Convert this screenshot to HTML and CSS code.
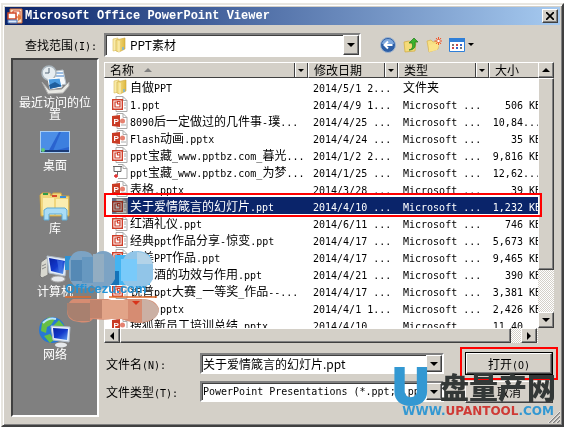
FILE: index.html
```html
<!DOCTYPE html>
<html lang="zh-CN">
  <head>
    <meta charset="UTF-8" />
    <meta name="viewport" content="width=device-width, initial-scale=1.0" />
    <title>Microsoft Office PowerPoint Viewer</title>
    <link rel="stylesheet" href="styles.css">
  </head>
  <body>
    <!-- Shared icons -->
    <svg class="defs" aria-hidden="true">
      <linearGradient id="gold" x1="0" x2="1">
        <stop offset="0" stop-color="#f8e797" />
        <stop offset="1" stop-color="#dfb83e" />
      </linearGradient>
      <linearGradient id="screen" x1="0" y1="0" x2="1" y2="1">
        <stop offset="0" stop-color="#0a22a0" />
        <stop offset="0.5" stop-color="#1238cc" />
        <stop offset="1" stop-color="#5c9cf0" />
      </linearGradient>
      <symbol id="folder" viewBox="0 0 16 16">
        <path d="M2 2l5-1v12l-5 1z" fill="#f9eba8" stroke="#d9bb55" stroke-width=".6" />
        <path d="M5 3l9-2v11l-6 3-3-1z" fill="url(#gold)" stroke="#c9a43c" stroke-width=".6" />
        <path d="M8 4v11" stroke="#fff6c8" />
        <path d="M12 10v3" stroke="#6cb4e8" stroke-width="1.400" />
      </symbol>
      <symbol id="ppt" viewBox="0 0 16 16">
        <path d="M4 .5h7l4 4v11H4z" fill="#fff" stroke="#aaa" />
        <path d="M11 .5v4h4M12 7h2M12 9h2M12 12h2" fill="none" stroke="#aaa" />
        <path d="M.7 3.700h9.600v9.600H.7z" fill="#fff" stroke="#cf3f2a" stroke-width="1.400" />
        <path d="M5 6H3v5h5V8M5.500 5.500h2.500v2.500H5.500z" fill="none" stroke="#cf3f2a" stroke-width="1.200" />
      </symbol>
      <symbol id="pptx" viewBox="0 0 16 16">
        <path d="M5 .5h6l4 4v11H5z" fill="#fff" stroke="#aaa" />
        <path d="M11 .5v4h4M9 12h5" fill="none" stroke="#aaa" />
        <circle cx="10.500" cy="8" r="2.500" fill="#e58170" />
        <path d="M0 3l8-1v12l-8-1z" fill="#c93b24" />
        <text x="1.500" y="11" class="icon-letter">P</text>
      </symbol>
      <symbol id="show" viewBox="0 0 16 16">
        <path d="M6 .5h5l4 4v10H6M11 .5v4h4" fill="none" stroke="#aaa" />
        <path d="M1 2.500h9M2 2.500v5h7v-5M5.500 8v3" fill="none" stroke="#666" />
        <path d="M4 10v4M2 12h4" stroke="#d22" stroke-width="1.300" />
      </symbol>
      <symbol id="monitor" viewBox="0 0 32 32">
        <path d="M2 9l7-5v18l-6 3-2-2z" fill="#d8d8cf" stroke="#777" />
        <path d="M3 13l4-2M3 16l4-2" stroke="#888" />
        <path d="M8 3l20 3-2 17-16-3z" fill="#e3edf8" stroke="#b3bfcc" />
        <path d="M10 5l16 3-2 13-12-3z" fill="url(#screen)" />
        <path d="M18 7l6 1-2 12-2-1z" fill="#4778e8" opacity=".6" />
        <ellipse cx="19" cy="26" rx="7" ry="3" fill="#e6e9ec" stroke="#aaa" />
      </symbol>
    </svg>

    <main class="dialog">
      <header class="titlebar">
        <svg class="app-icon" viewBox="0 0 16 16">
          <path d="M3 1h12v14H3z" fill="#f6e0c8" stroke="#d86a32" />
          <path d="M6 3h7v6H6z" fill="#fff" stroke="#d24726" />
          <path d="M1 5h8v6H1z" fill="#fff" stroke="#d24726" stroke-width="1.500" />
          <path d="M1 12h9v3H1z" fill="#dce9fa" stroke="#4a74b8" />
          <path d="M11 6v7l3-2V8z" fill="#e77d3c" />
        </svg>
        <h1>Microsoft Office PowerPoint Viewer</h1>
        <button class="close" type="button" aria-label="关闭">
          <svg viewBox="0 0 8 8"><path d="M0 0l8 8M8 0L0 8" stroke="#000" stroke-width="1.700" /></svg>
        </button>
      </header>

      <div class="lookin">
        <label for="folderSelect">查找范围<span class="en">(I):</span></label>
        <div class="combo folder-combo">
          <svg class="combo-icon"><use href="#folder" /></svg>
          <select id="folderSelect"><option>PPT素材</option></select>
          <span class="arrow"></span>
        </div>
        <nav class="tools">
          <button type="button" aria-label="后退">
            <svg viewBox="0 0 16 16">
              <circle cx="8" cy="8" r="7.500" fill="#2d5fa6" stroke="#9fb4cf" />
              <path d="M2 7a6 5 0 0 1 12 0z" fill="#7fa8dc" />
              <path d="M12.500 8H5M8 4.500L4.500 8 8 11.500" fill="none" stroke="#fff" stroke-width="2" />
            </svg>
          </button>
          <button type="button" aria-label="向上">
            <svg viewBox="0 0 16 16">
              <path d="M1 5l5-1 2 1 5-1-1 10-10 1z" fill="#f4db78" stroke="#d0a93c" stroke-width=".7" />
              <path d="M6 13c4-1 4-4 3-7H6l5-5 4 4h-3c1 5-1 8-6 8z" fill="#3db32f" stroke="#1d7a1a" stroke-width=".7" />
            </svg>
          </button>
          <button type="button" aria-label="新建文件夹">
            <svg viewBox="0 0 16 16">
              <path d="M1 4l4-1 2 2 6-1-1 8-9 3z" fill="#f7e084" stroke="#d8b14a" stroke-width=".7" />
              <path d="M3 8l11-2-3 7-8 2z" fill="#fbe48a" />
              <path d="M12.500 0v8M8.500 4h8M10 1l5 6M15 1l-5 6" stroke="#f0552a" />
              <circle cx="12.500" cy="4" r="1.200" fill="#fff" />
            </svg>
          </button>
          <button class="view" type="button" aria-label="查看">
            <svg viewBox="0 0 16 16">
              <path d="M.5 1.500h15v13H.5z" fill="#fff" stroke="#2f7fd8" />
              <path d="M0 1h16v4H0z" fill="#2f7fd8" />
              <path d="M3 7h2v2H3zM11 10h2v2h-2z" fill="#777" />
              <path d="M7 7h2v2H7zM3 10h2v2H3z" fill="#c44" />
              <path d="M11 7h2v2h-2zM7 10h2v2H7z" fill="#36c" />
            </svg>
            <i class="tri-down"></i>
          </button>
        </nav>
      </div>

      <div class="content">
        <!-- Places bar -->
        <nav class="places">
          <a href="#recent">
            <svg viewBox="0 0 32 32">
              <path d="M11 8l13-2 3 14-14 3z" fill="#f7fafc" stroke="#b8c3cc" />
              <path d="M17 9h7M17 12h8" stroke="#7da8d8" stroke-width="1.500" />
              <circle cx="10" cy="9" r="7" fill="#e6edf1" stroke="#a8b4bc" stroke-width="1.500" />
              <path d="M10 4v5H6" fill="none" stroke="#567" />
              <path d="M9 15l12-1 2 9-12 2z" fill="#4b9be0" stroke="#fff" />
              <path d="M10 21l6-3 7 4-12 3z" fill="#1f5f9e" />
              <path d="M3 18l7 8 13-1 7-7v4l-6 7-15 1z" fill="#e9e9e4" stroke="#aaa" />
            </svg>
            <span>最近访问的位置</span>
          </a>
          <a href="#desktop">
            <svg viewBox="0 0 32 32">
              <path d="M1 4h30v22H1z" fill="#a9cdf2" />
              <path d="M2 5h28v20H2z" fill="#2a63cf" />
              <path d="M2 5h18L9 25H2z" fill="#4c8ee6" />
              <path d="M22 5h8v15L14 24z" fill="#3c7fdf" />
              <path d="M2 23h28v2H2z" fill="#1b3c78" />
              <circle cx="4" cy="23" r="2" fill="#5fc878" />
            </svg>
            <span>桌面</span>
          </a>
          <a href="#library">
            <svg viewBox="0 0 32 32">
              <path d="M1 5l2-2h8l1 3 2-3h8l1 3h7v20H2z" fill="#f1d67c" stroke="#caa344" />
              <path d="M4 8h11v17H4zM17 9h12v16H17z" fill="#fbedb0" />
              <path d="M4 4h5" stroke="#2f9c48" stroke-width="2" />
              <path d="M13 6h5" stroke="#d84a2c" stroke-width="2" />
              <path d="M21 7h6" stroke="#3c8ed8" stroke-width="2" />
              <path d="M5 30V20l3-2h18l2 2v10h-5v-6H10v6z" fill="#a9dcf6" stroke="#5ea9d3" />
            </svg>
            <span>库</span>
          </a>
          <a href="#computer">
            <svg><use href="#monitor" /></svg>
            <span>计算机</span>
          </a>
          <a href="#network">
            <svg viewBox="0 0 32 32">
              <circle cx="13" cy="14" r="13" fill="#2878d4" />
              <path d="M3 7l7-6 6 2-4 6-4 2-1 6-5-2zM14 10l6-6 5 6-6 5zM5 20l6-2 4 6-4 3z" fill="#66bf45" />
              <path d="M4 7q6-6 13-4" fill="none" stroke="#bce4ff" stroke-width="2" />
              <path d="M12 10l19 1-1 15-16-2z" fill="#e8f0fa" stroke="#b3bfcc" />
              <path d="M14 12l15 1-1 11-13-2z" fill="url(#screen)" />
              <ellipse cx="22" cy="29" rx="6" ry="2.500" fill="#e6e9ec" />
            </svg>
            <span>网络</span>
          </a>
        </nav>

        <div class="main">
          <div class="list">
            <div class="list-left">
              <div class="table-clip">
                <table>
                  <colgroup>
                    <col>
                    <col class="col-date">
                    <col class="col-type">
                    <col class="col-size">
                  </colgroup>
                  <thead>
                    <tr>
                      <th><div>名称<i class="sort"></i><button type="button" aria-label="筛选名称"></button></div></th>
                      <th><div>修改日期<button type="button" aria-label="筛选日期"></button></div></th>
                      <th><div>类型<button type="button" aria-label="筛选类型"></button></div></th>
                      <th><div>大小</div></th>
                    </tr>
                  </thead>
                  <tbody id="files"></tbody>
                </table>
              </div>
              <div class="hscroll">
                <span class="sb left"></span>
                <span class="thumb"></span>
                <span class="sb right"></span>
              </div>
            </div>
            <div class="vscroll">
              <span class="sb up"></span>
              <span class="thumb"></span>
              <span class="sb down"></span>
            </div>
            <div class="row-mark"></div>
          </div>

          <form class="fields">
            <label for="fileName">文件名<span class="en">(N):</span></label>
            <div class="combo">
              <input type="text" id="fileName" value="关于爱情箴言的幻灯片.ppt" />
              <span class="arrow"></span>
            </div>
            <div class="open-mark">
              <button class="open" type="button">打开<span class="en">(O)</span></button>
            </div>
            <label for="fileType">文件类型<span class="en">(T):</span></label>
            <div class="combo">
              <select id="fileType" class="latin"><option>PowerPoint Presentations (*.ppt;*.pptx;*.pptm)</option></select>
              <span class="arrow"></span>
            </div>
            <button class="cancel" type="button">取消</button>
          </form>
        </div>
      </div>

      <svg class="grip" viewBox="0 0 12 12">
        <path d="M1 12L12 1M5 12l7-7M9 12l3-3" stroke="#808080" stroke-width="1.500" />
        <path d="M0 12L12 0M4 12l8-8M8 12l4-4" stroke="#fff" stroke-width=".7" />
      </svg>

      <!-- Site marks over the dialog -->
      <div class="brand">
        <span class="brand-u">U</span>
        <span class="brand-name">盘量产网</span>
        <span class="brand-url">WWW.<b>UPANTOOL</b>.COM</span>
      </div>
      <div class="stamp">
        <svg viewBox="0 0 98 74">
          <path d="M0 5h12v14H0z" fill="#2e91d2" />
          <path d="M50 4h35v30H50z" fill="#43b4f2" />
          <path d="M44 20h10v14H44z" fill="#1573b8" />
          <path d="M4 10q3-10 12-10 10 0 12 6 4-6 10-6 8 0 12 8v20q-5 10-14 10-6 0-9-4-5 5-12 3-8-1-11-11z" fill="#7ca3c4" />
          <path d="M6 9h11v21H6z" fill="#5589b5" />
          <path d="M17 6h11v26H17z" fill="#6798c0" />
          <path d="M28 3h11v28H28z" fill="#92adc2" />
          <path d="M57 12q3-12 15-12 14 0 16 14v14q-4 9-16 9-12 0-15-8z" fill="#91c5e8" />
          <path d="M56 8h16v22H56z" fill="#79cafa" />
          <path d="M72 1q14 1 16 12H72z" fill="#b3d3e8" />
          <path d="M8 48h35q10 4 18 0h16q14 0 17 10-1 12-18 14-12 0-24-6-6 4-24 2-4 5-14 3-12-1-12-11 0-9 6-12z" fill="#d68c72" />
          <path d="M2 52h23v18H12Q2 68 2 58z" fill="#a8806f" />
          <path d="M25 49h12v18H25z" fill="#c0846d" />
          <path d="M37 49h26v19H37z" fill="#e2a488" />
          <path d="M77 48q14 1 17 11-1 10-17 12z" fill="#cbb0a4" />
          <path d="M67 50h8l-4 4z" fill="#d8331b" />
          <path d="M0 46h26M44 46h48" stroke="#e26a2a" stroke-width="1.500" />
        </svg>
        <span>Officezu.com</span>
      </div>
    </main>

    <script src="files.js"></script>
  </body>
</html>
```
FILE: files.js
```js
// icon, name, date, type, size
const files = [
  ["folder", "自做PPT", "2014/5/1 2...", "文件夹", ""],
  ["ppt", "1.ppt", "2014/4/9 1...", "Microsoft ...", "506 KB"],
  ["pptx", "8090后一定做过的几件事-璞...", "2014/4/25 ...", "Microsoft ...", "10,84..."],
  ["pptx", "Flash动画.pptx", "2014/4/24 ...", "Microsoft ...", "35 KB"],
  ["ppt", "ppt宝藏_www.pptbz.com_暮光...", "2014/1/2 2...", "Microsoft ...", "9,816 KB"],
  ["show", "ppt宝藏_www.pptbz.com_为梦...", "2014/1/25 ...", "Microsoft ...", "12,62..."],
  ["pptx", "表格.pptx", "2014/3/28 ...", "Microsoft ...", "39 KB"],
  ["ppt", "关于爱情箴言的幻灯片.ppt", "2014/4/10 ...", "Microsoft ...", "1,232 KB"],
  ["ppt", "红酒礼仪.ppt", "2014/6/11 ...", "Microsoft ...", "746 KB"],
  ["ppt", "经典ppt作品分享-惊变.ppt", "2014/4/17 ...", "Microsoft ...", "5,673 KB"],
  ["ppt", "精美PPT作品.ppt", "2014/4/17 ...", "Microsoft ...", "9,465 KB"],
  ["ppt", "葡萄酒的功效与作用.ppt", "2014/4/21 ...", "Microsoft ...", "390 KB"],
  ["ppt", "锐普ppt大赛_一等奖_作品--...", "2014/4/17 ...", "Microsoft ...", "3,381 KB"],
  ["pptx", "数据.pptx", "2014/4/1 1...", "Microsoft ...", "2,426 KB"],
  ["pptx", "搜狐新员工培训总结.pptx", "2014/4/10 ...", "Microsoft ...", "11,40..."],
];
const selected = 7;

// Latin runs use the narrow fixed-width font
function mixed(text) {
  return text.replace(/[\x20-\x7e]+/g, '<span class="en">$&</span>');
}

const body = document.getElementById("files");
files.forEach(([icon, ...cells], i) => {
  const row = document.createElement("tr");
  if (i === selected) row.className = "selected";
  row.innerHTML = cells
    .map((cell, c) => {
      const svg = c === 0 ? `<svg class="file-icon"><use href="#${icon}" /></svg>` : "";
      return `<td><div class="cell">${svg}<span>${mixed(cell)}</span></div></td>`;
    })
    .join("");
  body.appendChild(row);
});
```
FILE: styles.css
```css
* {
  box-sizing: border-box;
}
body {
  margin: 0;
  padding: 3px 4px 4px 1px;
  background: #fff;
  color: #000;
  font: 12px/16px "Noto Sans CJK SC", sans-serif;
}
button,
input,
select {
  font: inherit;
  color: inherit;
}
svg {
  display: block;
}
.defs {
  position: absolute;
  width: 0;
  height: 0;
}
.icon-letter {
  font: bold 8px "Liberation Sans", sans-serif;
  fill: #fff;
}
.en,
.latin {
  font-family: "DejaVu Sans Mono", monospace;
  font-size: 10px;
  line-height: 10px;
  white-space: pre;
}

.dialog {
  position: relative;
  padding: 2px;
  background: #d4d0c8;
  border: 2px solid;
  border-color: #e8e6e0 #404040 #404040 #e8e6e0;
  box-shadow: inset 1px 1px #fff, inset -1px -1px #808080;
}

/* Title bar */
.titlebar {
  display: flex;
  align-items: center;
  height: 18px;
  padding: 0 2px;
  background: linear-gradient(90deg, #0a246a, #a6caf0);
  color: #fff;
}
.app-icon {
  width: 16px;
  height: 16px;
}
.titlebar h1 {
  flex: 1;
  margin: 0 0 0 2px;
  font: bold 12px/18px "Liberation Mono", monospace;
}
.close {
  display: grid;
  place-items: center;
  width: 16px;
  height: 14px;
  padding: 0;
}
.close svg {
  width: 8px;
  height: 8px;
}

/* Raised 3D parts */
.close,
.arrow,
.sb,
.thumb,
.open,
.cancel {
  background: #d4d0c8;
  border: 1px solid;
  border-color: #fff #404040 #404040 #fff;
  box-shadow: inset -1px -1px #808080;
}

/* Look in row */
.lookin {
  display: flex;
  align-items: center;
  height: 33px;
  padding: 6px 0 0 20px;
}
.lookin label {
  width: 79px;
}
.combo {
  position: relative;
  height: 21px;
  border: 2px solid;
  border-color: #808080 #fff #fff #808080;
  box-shadow: inset 1px 1px #404040;
  background: #fff;
}
.combo select,
.combo input {
  display: block;
  width: 100%;
  height: 100%;
  padding: 0 20px 0 1px;
  border: 0;
  border-radius: 0;
  background: none;
  appearance: none;
  outline: 0;
}
.folder-combo {
  flex: 1;
  max-width: 48%;
  height: 24px;
}
.combo .combo-icon + select {
  padding-left: 24px;
}
.combo-icon {
  position: absolute;
  left: 5px;
  top: 2px;
  width: 16px;
  height: 16px;
}
.arrow {
  position: absolute;
  top: 0;
  right: 0;
  bottom: 0;
  width: 16px;
  display: grid;
  place-items: center;
  pointer-events: none;
}
.arrow::before,
.tri-down,
th button::before,
.down::before {
  content: "";
  border: 4px solid transparent;
  border-top-color: #000;
  border-bottom: 0;
}
.tools {
  display: flex;
  gap: 7px;
  margin-left: 19px;
}
.tools button {
  display: flex;
  align-items: center;
  gap: 3px;
  padding: 0;
  border: 0;
  background: none;
}
.tools svg {
  width: 16px;
  height: 16px;
}
.tri-down {
  border-width: 3px;
  border-bottom: 0;
}

/* Places bar */
.content {
  display: flex;
  gap: 5px;
  padding: 0 6px 6px;
}
.places {
  flex: none;
  width: 88px;
  min-height: 359px;
  padding-top: 4px;
  background: #808080;
  border: 2px solid;
  border-color: #404040 #fff #fff #404040;
}
.places a {
  display: flex;
  flex-direction: column;
  align-items: center;
  height: 63px;
  color: #fff;
  line-height: 12px;
  text-align: center;
  text-decoration: none;
}
.places svg {
  flex: none;
  width: 32px;
  height: 32px;
}
.places span {
  width: 74px;
}

/* File list */
.main {
  flex: 1;
  min-width: 0;
  padding-top: 4px;
}
.list {
  position: relative;
  display: flex;
  height: 281px;
  background: linear-gradient(#fff, #fff) 0 0 / calc(100% - 16px) 100% no-repeat;
}
.list-left {
  flex: 1;
  min-width: 0;
  display: flex;
  flex-direction: column;
}
.table-clip {
  flex: 1;
  min-height: 0;
  overflow: hidden;
}
table {
  width: calc(100% + 3px);
  table-layout: fixed;
  border-collapse: collapse;
}
.col-date {
  width: 90px;
}
.col-type {
  width: 91px;
}
.col-size {
  width: 52px;
}
th {
  padding: 0;
  font-weight: normal;
  text-align: left;
}
th div {
  display: flex;
  align-items: center;
  height: 16px;
  padding-left: 5px;
  background: #d4d0c8;
  border-top: 1px solid #fff;
  border-left: 1px solid #fff;
  border-bottom: 1px solid #404040;
  white-space: nowrap;
}
th button {
  display: grid;
  place-items: center;
  width: 14px;
  height: 14px;
  margin-left: auto;
  padding: 0;
  background: none;
  border: 0;
  border-left: 1px solid #404040;
  border-right: 1px solid #404040;
  box-shadow: inset 1px 0 #fff;
}
th button::before {
  border-width: 3px;
  border-bottom: 0;
}
.sort {
  margin-left: 10px;
  border: 4px solid transparent;
  border-top: 0;
  border-bottom-color: #808080;
}
td {
  padding: 0;
}
.cell {
  display: flex;
  align-items: center;
  gap: 2px;
  height: 17px;
  padding-left: 5px;
  line-height: 17px;
  white-space: nowrap;
}
td:first-child .cell {
  padding-left: 8px;
}
td:last-child .cell {
  justify-content: flex-end;
  padding: 0;
}
.file-icon {
  flex: none;
  width: 16px;
  height: 16px;
}
.selected td {
  background: #0a246a;
  color: #fff;
}
.selected td:first-child {
  background: linear-gradient(90deg, #fff 24px, #0a246a 24px);
}
.selected .file-icon {
  background: #8f9cc0;
  mix-blend-mode: multiply;
  filter: brightness(0.7);
}

/* Scroll bars */
.hscroll,
.vscroll {
  display: flex;
  background: repeating-conic-gradient(#fff 0 25%, #d4d0c8 0 50%) 0 0 / 2px 2px;
}
.hscroll {
  height: 15px;
  padding-right: 1px;
}
.hscroll .thumb {
  flex: 1;
  margin-right: 10px;
}
.vscroll {
  flex-direction: column;
  width: 16px;
  padding-bottom: 15px;
  background-clip: content-box;
}
.vscroll .thumb {
  flex: 1;
  margin-bottom: 42px;
}
.sb {
  flex: none;
  display: grid;
  place-items: center;
  width: 16px;
  height: 16px;
}
.hscroll .sb {
  height: 15px;
}
.up::before,
.left::before,
.right::before {
  content: "";
  border: 4px solid transparent;
}
.up::before {
  border-top: 0;
  border-bottom-color: #000;
}
.left::before {
  border-left: 0;
  border-right-color: #000;
}
.right::before {
  border-right: 0;
  border-left-color: #000;
}
.row-mark {
  position: absolute;
  left: 0;
  right: 12px;
  top: 131px;
  height: 24px;
  border: 2px solid #f00;
}

/* File name and type */
.fields {
  display: grid;
  grid-template-columns: 93px 1fr 98px;
  grid-template-rows: 33px 23px;
  column-gap: 16px;
  align-items: center;
  margin: 4px -4px 0 2px;
}
.fields .combo {
  margin-left: -15px;
}
.open-mark {
  display: grid;
  padding: 4px;
  height: 33px;
  border: 2px solid #f00;
}
.open,
.cancel {
  padding: 0;
}
.open {
  outline: 1px solid #000;
}
.cancel {
  height: 22px;
  margin: 0 5px;
}

.grip {
  position: absolute;
  right: 2px;
  bottom: 2px;
  width: 12px;
  height: 12px;
}

/* Site marks */
.brand {
  position: absolute;
  right: 6px;
  bottom: 2px;
  width: 164px;
  height: 58px;
  pointer-events: none;
}
.brand span {
  position: absolute;
  white-space: nowrap;
}
.brand-u {
  left: 0;
  top: 0;
  color: #3398d2;
  font: 900 52px/44px "Inter", sans-serif;
}
.brand-name {
  right: 0;
  top: 5px;
  color: #333837;
  font-weight: 900;
  font-size: 29px;
  line-height: 32px;
}
.brand-url {
  right: 2px;
  bottom: 4px;
  color: #3398d2;
  font: bold 12px/16px "DejaVu Sans", sans-serif;
}
.brand-url b {
  color: #cf3a35;
}
.stamp {
  position: absolute;
  left: 62px;
  top: 246px;
  width: 98px;
  height: 74px;
  pointer-events: none;
}
.stamp span {
  position: absolute;
  left: 0;
  top: 30px;
  color: #2593d6;
  font: bold 13px/16px "Liberation Sans", sans-serif;
}
```
